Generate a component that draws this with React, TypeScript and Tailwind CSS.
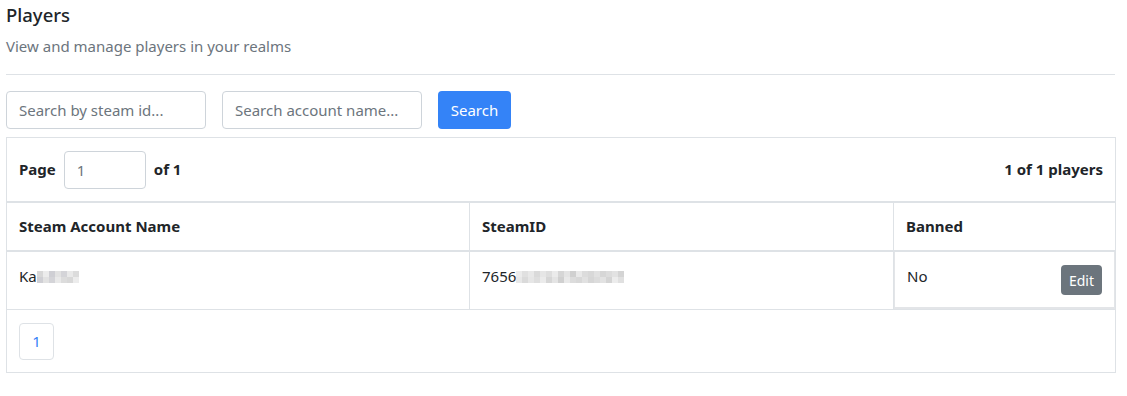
import React from "react";

const Blur = ({ cells }: { cells: string[] }) => (
  <span className="inline-flex items-center align-middle">
    <span className="flex flex-col">
      <span className="flex">
        {cells.map((c, i) => (
          <span key={i} className="w-[6px] h-[6px]" style={{ background: c }} />
        ))}
      </span>
      <span className="flex">
        {cells.map((c, i) => (
          <span key={i} className="w-[6px] h-[6px]" style={{ background: cells[(i + 2) % cells.length] }} />
        ))}
      </span>
    </span>
  </span>
);

export default function App() {
  const font = { fontFamily: '"Noto Sans", "Open Sans", sans-serif' };
  return (
    <div className="bg-white w-[1127px] h-[396px] text-[#212529]" style={font}>
      <div className="px-[6px] pt-[3px]">
        <h1 className="text-[18.5px] font-medium leading-[24px]">Players</h1>
        <p className="text-[15px] text-[#6c757d] mt-[9px] leading-[20px]">View and manage players in your realms</p>
        <div className="h-px bg-[#dee2e6] mt-[18px] w-[1109px]" />
        <div className="flex gap-4 mt-[16px]">
          <input
            className="w-[200px] h-[38px] border border-[#ced4da] rounded px-3 text-[15px] placeholder:text-[#6c757d] outline-none"
            placeholder="Search by steam id..."
          />
          <input
            className="w-[200px] h-[38px] border border-[#ced4da] rounded px-3 text-[15px] placeholder:text-[#6c757d] outline-none"
            placeholder="Search account name..."
          />
          <button className="w-[73px] h-[38px] rounded bg-[#3483f7] text-white text-[15px]">Search</button>
        </div>
        <div className="mt-[8px] w-[1110px] border border-[#dee2e6] text-[15px]">
          <div className="h-[63px] flex items-center justify-between px-[12px]">
            <div className="flex items-center gap-2 font-bold">
              <span>Page</span>
              <input
                className="w-[82px] h-[38px] border border-[#ced4da] rounded px-3 font-normal text-[#6c757d] outline-none"
                defaultValue="1"
              />
              <span>of 1</span>
            </div>
            <span className="font-bold">1 of 1 players</span>
          </div>
          <div className="grid grid-cols-[463px_424px_1fr] border-t-2 border-[#dee2e6]">
            <div className="h-[47px] flex items-center px-[12px] font-bold border-r border-[#dee2e6]">Steam Account Name</div>
            <div className="h-[47px] flex items-center px-[12px] font-bold border-r border-[#dee2e6]">SteamID</div>
            <div className="h-[47px] flex items-center px-[12px] font-bold">Banned</div>
          </div>
          <div className="grid grid-cols-[463px_424px_1fr] border-t-2 border-[#dee2e6]">
            <div className="h-[57px] flex items-center px-[12px] pb-[8px] border-r border-[#dee2e6]">
              <span>Ka</span>
              <Blur cells={["#d8d8d8", "#ececec", "#cfcfd4", "#e2e2e2", "#d4d4d8", "#e9e9e9", "#dcdcdc"]} />
            </div>
            <div className="h-[57px] flex items-center px-[12px] pb-[8px] border-r border-[#dee2e6]">
              <span>7656</span>
              <Blur
                cells={[
                  "#ececec",
                  "#e0e0e0",
                  "#e8e8e8",
                  "#dadada",
                  "#e6e6e6",
                  "#dedede",
                  "#ebebeb",
                  "#d6d6d6",
                  "#e4e4e4",
                  "#d0d0d0",
                  "#e9e9e9",
                  "#dcdcdc",
                  "#d8d8d8",
                  "#e1e1e1",
                  "#d6d6d6",
                  "#dcdcdc",
                  "#e2e2e2",
                  "#d4d4d4",
                ]}
              />
            </div>
            <div className="h-[57px] flex items-center justify-between pl-[12px] pr-[12px] border-l border-b-2 border-r border-[#e3e5e8]">
              <span className="pb-[6px]">No</span>
              <button className="w-[41px] h-[30px] rounded bg-[#6c757d] text-white text-[14px] mt-[1px]">Edit</button>
            </div>
          </div>
          <div className="h-[63px] flex items-center px-[12px] border-t border-[#dee2e6]">
            <button className="w-[35px] h-[37px] border border-[#dee2e6] rounded text-[#3483f7] text-[15px]">1</button>
          </div>
        </div>
      </div>
    </div>
  );
}
